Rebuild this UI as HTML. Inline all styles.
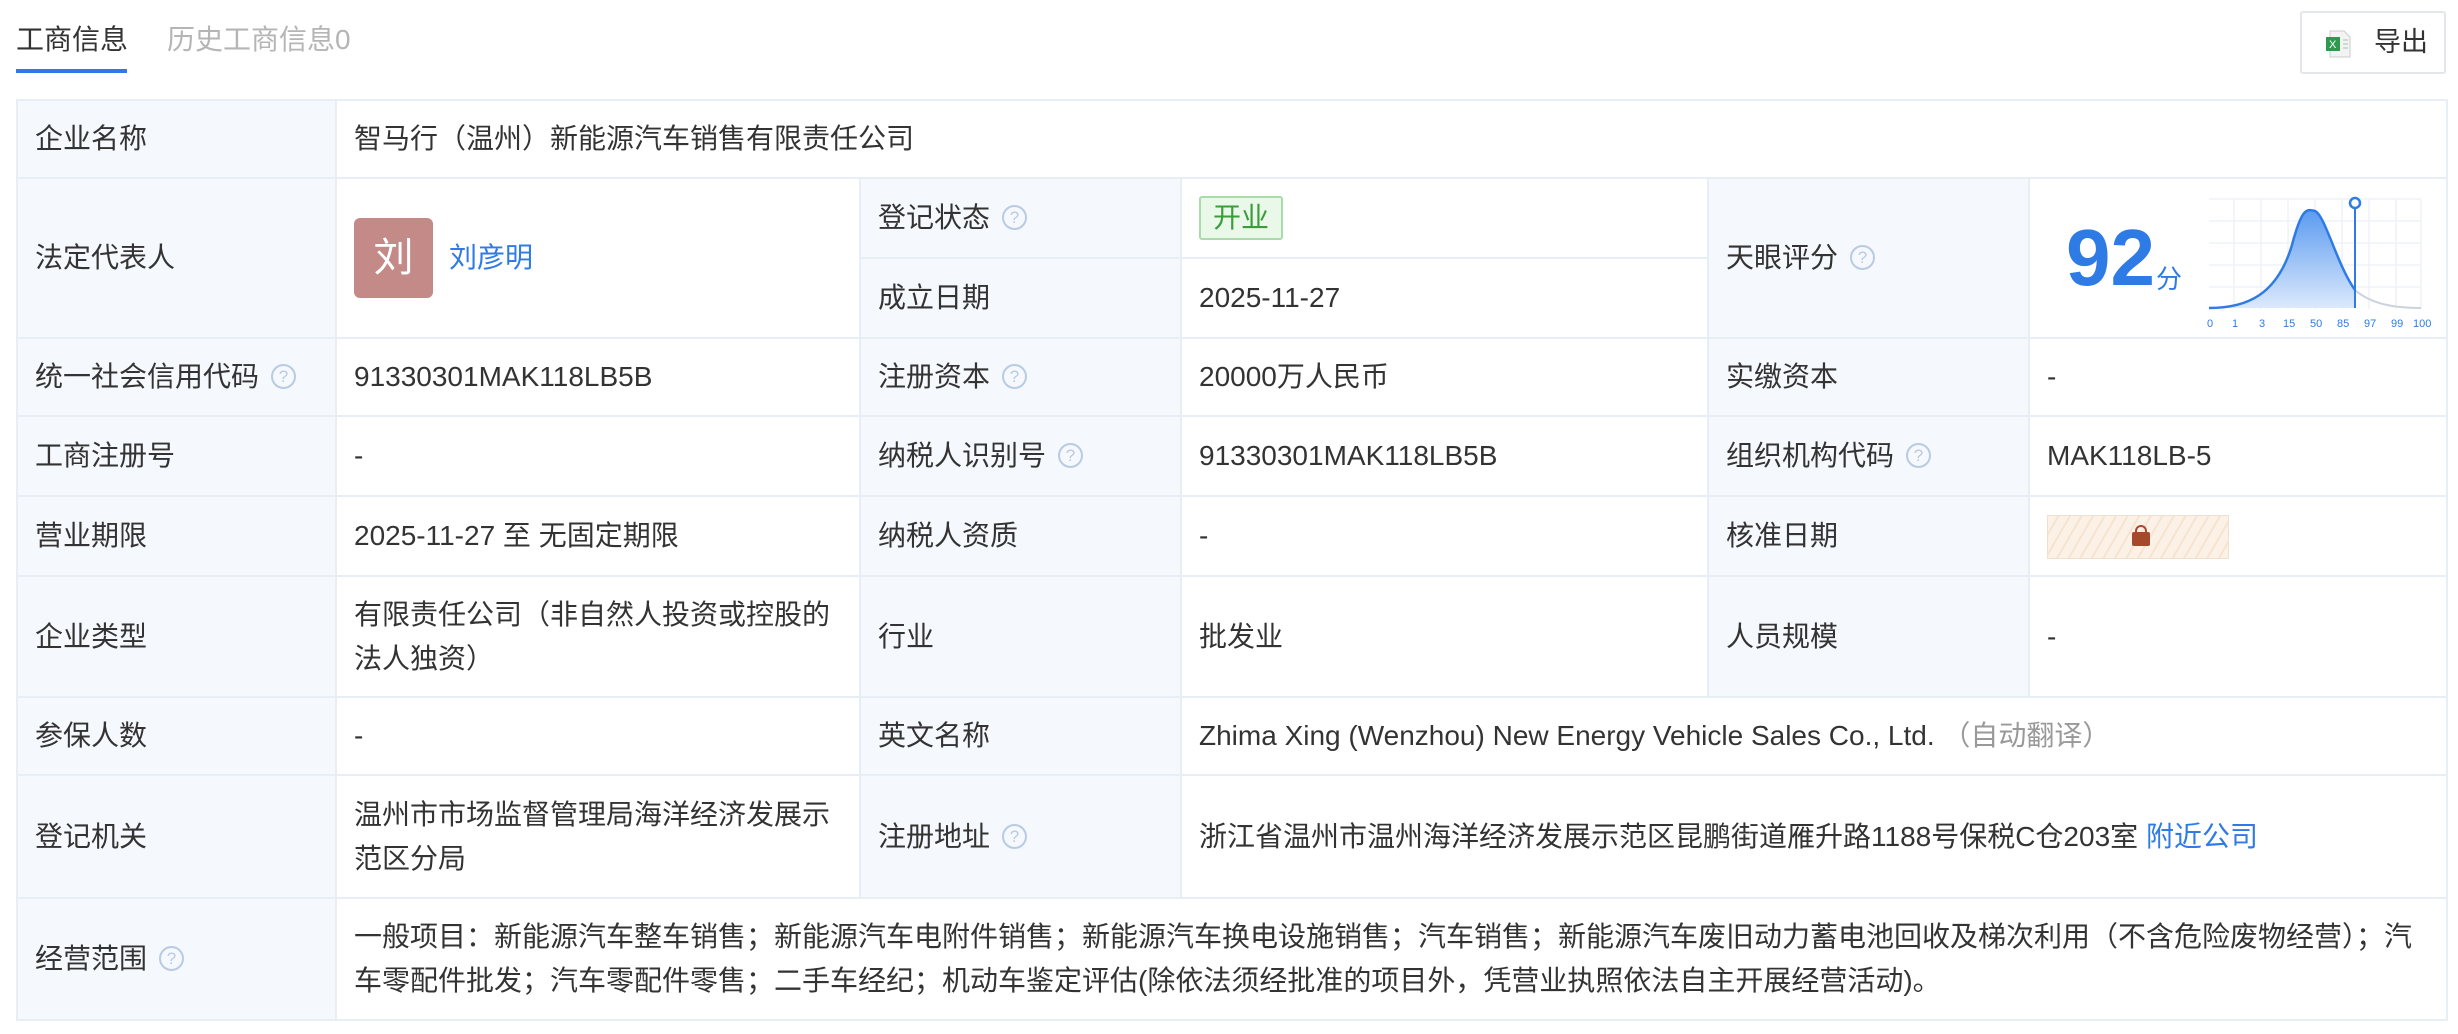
<!DOCTYPE html>
<html><head><meta charset="utf-8"><style>
*{margin:0;padding:0;box-sizing:border-box}
body{width:2458px;height:1034px;background:#fff;font-family:"Liberation Sans","Noto Sans CJK SC",sans-serif;color:#333;position:relative;overflow:hidden}
.tab{position:absolute;top:18px;font-size:28px}
table{position:absolute;left:16px;top:99px;border-collapse:collapse;table-layout:fixed;width:2430px}
td{border:2px solid #e8eef5;font-size:28px;padding:0 17px;vertical-align:middle;line-height:44px}
td.l{background:#f5f8fc}
.q{display:inline-block;width:25px;height:25px;border:2px solid #b8cbe3;border-radius:50%;color:#b8cbe3;font-size:17px;line-height:21px;text-align:center;vertical-align:middle;margin-left:12px;position:relative;top:-2px}
.blue{color:#2f7be5}
</style></head><body>
<div class="tab" style="left:16px;color:#333">工商信息</div>
<div style="position:absolute;left:16px;top:69px;width:111px;height:4px;background:#2f7be5"></div>
<div class="tab" style="left:167px;color:#b5b5b5">历史工商信息0</div>
<div style="position:absolute;left:2300px;top:11px;width:146px;height:63px;border:2px solid #e3e6ea;border-radius:3px;font-size:27px;line-height:58px;padding-left:72px">导出
<svg style="position:absolute;left:24px;top:17px" width="26" height="28" viewBox="0 0 26 28"><path d="M4 1h14l6 6v20H4z" fill="#f3f3f3" stroke="#ccc"/><rect x="0" y="7" width="14" height="14" fill="#2f9a4f"/><text x="3" y="18" font-size="11" fill="#fff" font-family="Liberation Sans">X</text><path d="M17 10h5M17 14h5M17 18h5" stroke="#9bc9a8"/></svg></div>
<table>
<colgroup><col style="width:319px"><col style="width:524px"><col style="width:321px"><col style="width:527px"><col style="width:321px"><col style="width:418px"></colgroup>
<tr style="height:78px"><td class="l">企业名称</td><td colspan="5">智马行（温州）新能源汽车销售有限责任公司</td></tr>
<tr style="height:80px"><td class="l" rowspan="2">法定代表人</td><td rowspan="2"><span style="display:inline-block;width:79px;height:80px;background:#c38a87;border-radius:6px;color:#fff;font-size:40px;line-height:80px;text-align:center;vertical-align:middle">刘</span><span class="blue" style="margin-left:16px;vertical-align:middle">刘彦明</span></td><td class="l">登记状态<span class="q">?</span></td><td><span style="display:inline-block;background:#e9f8e9;border:2px solid #a9dca9;color:#3a9d3a;border-radius:3px;padding:0 12px;line-height:40px">开业</span></td><td class="l" rowspan="2">天眼评分<span class="q">?</span></td><td rowspan="2" style="position:relative;padding:0">
<span style="position:absolute;left:36px;top:34px;color:#2f7be5;font-size:80px;font-weight:bold;line-height:90px">92</span><span style="position:absolute;left:126px;top:78px;color:#2f7be5;font-size:26px">分</span>
<svg style="position:absolute;left:177px;top:16px" width="230" height="135" viewBox="0 0 230 135">
<defs><linearGradient id="g" x1="0" y1="0" x2="0" y2="1"><stop offset="0" stop-color="#5b9bf0"/><stop offset="1" stop-color="#dbe9fc"/></linearGradient></defs>
<g stroke="#eef2f7" stroke-width="1.5"><path d="M2 4h212M2 26h212M2 48h212M2 70h212M2 92h212M27 4v110M54 4v110M81 4v110M108 4v110M135 4v110M162 4v110M189 4v110M214 4v110"/></g>
<path d="M2 113C40 113 70 100 85 50C95 12 100 14 108 16C118 20 130 70 148 95L148 113Z" fill="url(#g)"/>
<path d="M2 113C40 113 70 100 85 50C95 12 100 14 108 16C118 20 130 70 148 95" fill="none" stroke="#2f7be5" stroke-width="2.5"/>
<path d="M148 95C165 110 190 113 214 113" fill="none" stroke="#ccd3dc" stroke-width="2"/>
<line x1="148" y1="8" x2="148" y2="113" stroke="#2f7be5" stroke-width="2"/>
<circle cx="148" cy="8" r="5" fill="#fff" stroke="#2f7be5" stroke-width="2.5"/>
<g font-size="11" fill="#2f7be5" font-family="Liberation Sans"><text x="0" y="132">0</text><text x="25" y="132">1</text><text x="52" y="132">3</text><text x="76" y="132">15</text><text x="103" y="132">50</text><text x="130" y="132">85</text><text x="157" y="132">97</text><text x="184" y="132">99</text><text x="206" y="132">100</text></g>
</svg></td></tr>
<tr style="height:80px"><td class="l">成立日期</td><td>2025-11-27</td></tr>
<tr style="height:78px"><td class="l">统一社会信用代码<span class="q">?</span></td><td>91330301MAK118LB5B</td><td class="l">注册资本<span class="q">?</span></td><td>20000万人民币</td><td class="l">实缴资本</td><td>-</td></tr>
<tr style="height:80px"><td class="l">工商注册号</td><td>-</td><td class="l">纳税人识别号<span class="q">?</span></td><td>91330301MAK118LB5B</td><td class="l">组织机构代码<span class="q">?</span></td><td>MAK118LB-5</td></tr>
<tr style="height:80px"><td class="l">营业期限</td><td>2025-11-27 至 无固定期限</td><td class="l">纳税人资质</td><td>-</td><td class="l">核准日期</td><td><span style="display:inline-block;width:182px;height:44px;vertical-align:middle;border:1px solid #f0e0cc;background:repeating-linear-gradient(120deg,#fbf1e6 0 8px,#f6e4d0 8px 10px);position:relative"><span style="position:absolute;left:84px;top:16px;width:18px;height:14px;background:#a5482c;border-radius:2px"></span><span style="position:absolute;left:87px;top:9px;width:12px;height:10px;border:2px solid #a5482c;border-bottom:none;border-radius:6px 6px 0 0"></span></span></td></tr>
<tr style="height:121px"><td class="l">企业类型</td><td>有限责任公司（非自然人投资或控股的法人独资）</td><td class="l">行业</td><td>批发业</td><td class="l">人员规模</td><td>-</td></tr>
<tr style="height:78px"><td class="l">参保人数</td><td>-</td><td class="l">英文名称</td><td colspan="3">Zhima Xing (Wenzhou) New Energy Vehicle Sales Co., Ltd. <span style="color:#999">（自动翻译）</span></td></tr>
<tr style="height:123px"><td class="l">登记机关</td><td>温州市市场监督管理局海洋经济发展示范区分局</td><td class="l">注册地址<span class="q">?</span></td><td colspan="3">浙江省温州市温州海洋经济发展示范区昆鹏街道雁升路1188号保税C仓203室 <span class="blue">附近公司</span></td></tr>
<tr style="height:122px"><td class="l">经营范围<span class="q">?</span></td><td colspan="5" style="padding-right:14px">一般项目：新能源汽车整车销售；新能源汽车电附件销售；新能源汽车换电设施销售；汽车销售；新能源汽车废旧动力蓄电池回收及梯次利用（不含危险废物经营）；汽车零配件批发；汽车零配件零售；二手车经纪；机动车鉴定评估(除依法须经批准的项目外，凭营业执照依法自主开展经营活动)。</td></tr>
</table>
</body></html>
